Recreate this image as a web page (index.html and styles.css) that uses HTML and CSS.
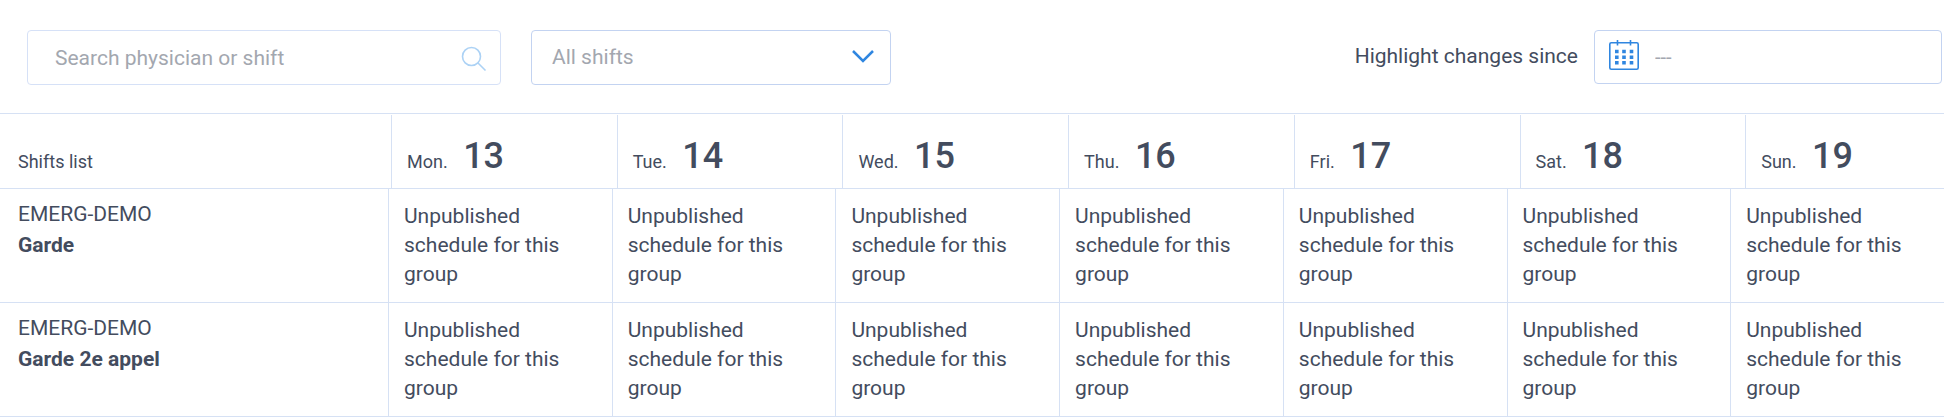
FILE: index.html
```html
<!DOCTYPE html>
<html lang="en">
<head>
    <meta charset="UTF-8">
    <title>Shifts list</title>
    <link rel="stylesheet" href="styles.css">
</head>
<body>
    <form class="toolbar">
        <div class="field search">
            <input type="text" id="search" aria-label="Search physician or shift" placeholder="Search physician or shift">
            <svg class="search-icon" width="26" height="26" viewBox="0 0 26 26" fill="none" stroke="#acd2f5" stroke-width="1.6">
                <circle cx="10.5" cy="10.5" r="9"/>
                <path d="M17 17l7.500 7.500"/>
            </svg>
        </div>

        <div class="field filter">
            <select id="shifts" aria-label="Shifts">
                <option>All shifts</option>
            </select>
            <svg class="chevron" width="22" height="14" viewBox="0 0 22 14" fill="none" stroke="#2f86e0" stroke-width="2.500">
                <path d="M1 2l10 10 10-10"/>
            </svg>
        </div>

        <label class="since-label" for="since">Highlight changes since</label>
        <div class="field since">
            <svg class="calendar" width="30" height="30" viewBox="0 0 30 30" fill="none" stroke="#2f86e0" stroke-width="1.6">
                <rect x="0.8" y="2.800" width="28.400" height="26.400" rx="1.500"/>
                <path d="M8.500 0v5.500M21.500 0v5.500"/>
                <path d="M6 11.500h3.600M13.200 11.500h3.600M20.700 11.500h3.600M6 17.200h3.600M13.200 17.200h3.600M20.700 17.200h3.600M6 22.800h3.600M13.200 22.800h3.600M20.700 22.800h3.600" stroke-width="3.600"/>
            </svg>
            <input type="text" id="since" placeholder="---">
        </div>
    </form>

    <div class="schedule">
        <table class="days">
            <tr>
                <th class="first">Shifts list</th>
                <th>Mon. <strong>13</strong></th>
                <th>Tue. <strong>14</strong></th>
                <th>Wed. <strong>15</strong></th>
                <th>Thu. <strong>16</strong></th>
                <th>Fri. <strong>17</strong></th>
                <th>Sat. <strong>18</strong></th>
                <th>Sun. <strong>19</strong></th>
            </tr>
        </table>

        <table class="shifts">
            <tr>
                <th class="first">EMERG-DEMO<br><strong>Garde</strong></th>
                <td>Unpublished schedule for this group</td>
                <td>Unpublished schedule for this group</td>
                <td>Unpublished schedule for this group</td>
                <td>Unpublished schedule for this group</td>
                <td>Unpublished schedule for this group</td>
                <td>Unpublished schedule for this group</td>
                <td>Unpublished schedule for this group</td>
            </tr>
            <tr>
                <th class="first">EMERG-DEMO<br><strong>Garde 2e appel</strong></th>
                <td>Unpublished schedule for this group</td>
                <td>Unpublished schedule for this group</td>
                <td>Unpublished schedule for this group</td>
                <td>Unpublished schedule for this group</td>
                <td>Unpublished schedule for this group</td>
                <td>Unpublished schedule for this group</td>
                <td>Unpublished schedule for this group</td>
            </tr>
        </table>
    </div>
</body>
</html>
```

FILE: styles.css
```css
* {
    box-sizing: border-box;
}

body {
    margin: 0;
    background-color: #fff;
    color: #434c5e;
    font-family: Roboto, sans-serif;
    font-size: 21px;
    line-height: 29px;
    overflow-x: hidden;
}

/* Toolbar */
.toolbar {
    display: flex;
    align-items: flex-start;
    padding: 30px 2px 28px 27px;
}

.field {
    position: relative;
}

.field input,
.field select {
    display: block;
    width: 100%;
    height: 55px;
    border: 1px solid #c3d3f1;
    border-radius: 4px;
    background-color: #fff;
    color: #a3a7af;
    font-family: inherit;
    font-size: 21px;
    appearance: none;
}

.field input::placeholder {
    color: #a3a7af;
    opacity: 1;
}

.search {
    flex: 0 1 474px;
    margin-right: 30px;
}

.search input {
    padding: 0 60px 0 27px;
    border-color: #d6e1f7;
}

.search-icon {
    position: absolute;
    top: 16px;
    right: 14px;
}

.filter {
    flex: 0 1 360px;
}

.filter select {
    padding: 0 50px 2px 20px;
}

.chevron {
    position: absolute;
    top: 19px;
    right: 17px;
    pointer-events: none;
}

.since-label {
    margin: 12px 16px 0 auto;
}

.since {
    flex: 0 1 348px;
}

.since input {
    height: 54px;
    padding: 0 16px 0 60px;
    font-size: 20px;
}

.calendar {
    position: absolute;
    top: 10px;
    left: 15px;
}

/* Schedule */
.schedule {
    border-top: 1px solid #d6e1f4;
}

table {
    border-spacing: 0;
    table-layout: fixed;
}

th,
td {
    padding: 0;
    border-left: 1px solid #d6e1f4;
    border-bottom: 1px solid #d6e1f4;
    font-weight: 400;
    text-align: left;
    vertical-align: top;
}

.first {
    width: 391px;
    padding-left: 18px;
    border-left: 0;
}

.days {
    width: calc(100% + 27px);
    padding-top: 1px;
}

.days th {
    height: 74px;
    padding-bottom: 12px;
    font-size: 18px;
    vertical-align: bottom;
}

.days th + th {
    padding-left: 15px;
}

.days strong {
    margin-left: 11px;
    font-size: 36px;
    font-weight: 500;
}

.shifts {
    width: calc(100% + 10px);
}

.shifts .first {
    width: 388px;
    padding-top: 10px;
    line-height: 31px;
}

.shifts td {
    padding: 13px 15px;
}
```
